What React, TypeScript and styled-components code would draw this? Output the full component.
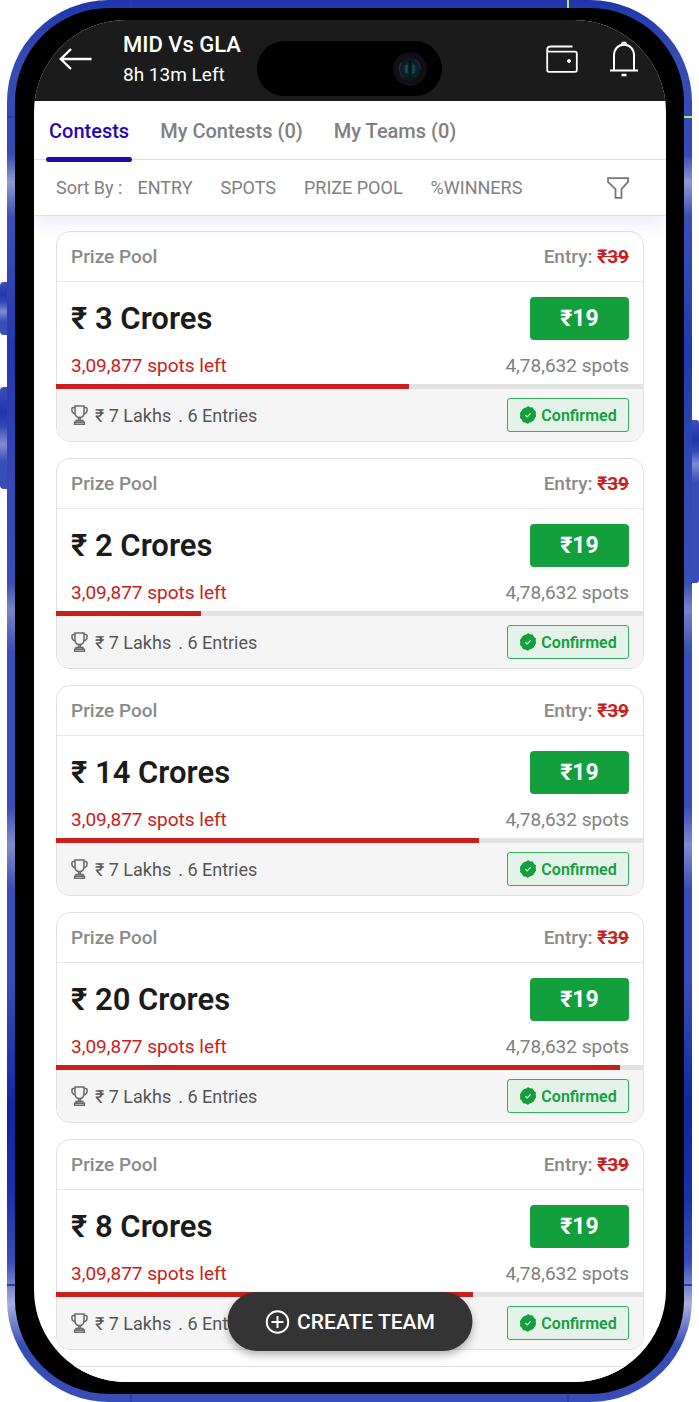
import React from "react";
import styled, { createGlobalStyle } from "styled-components";

const GlobalStyle = createGlobalStyle`
  *, *::before, *::after { box-sizing: border-box; }
  body { margin: 0; background: #fff; font-family: Roboto, "Liberation Sans", sans-serif; }
  button, h1, h2, p, ul { margin: 0; padding: 0; font: inherit; }
  button { border: 0; background: none; color: inherit; cursor: pointer; }
  svg { display: block; flex: none; }
`;

const Stage = styled.div`
  height: 100vh;
  min-height: 700px;
  padding: 0 7px;
  display: flex;
`;

const Phone = styled.div`
  position: relative;
  flex: 1;
  min-width: 0;
  display: flex;
  padding: 8px;
  border-radius: 102px;
  background: linear-gradient(
    to bottom,
    #1f36ab 0%, #364ab4 4%, #364ab4 11%, #8f99d6 13%, #3a4eb6 15.5%, #3248b4 19%,
    #2138ae 25%, #3248b4 34%, #384db5 41.5%, #7783cb 43.5%, #384db6 46.5%,
    #384db6 57.5%, #7f8bd0 60.3%, #384db6 63.5%, #384db6 70%, #1226a3 79%,
    #1a2fa9 85%, #384db6 90%, #a7aee0 93%, #364cb6 96%, #384db6 100%
  );
`;

const SideButton = styled.span<{ $side: "left" | "right"; $top: number; $height: number }>`
  position: absolute;
  ${(p) => p.$side}: -7px;
  top: ${(p) => p.$top}px;
  width: 7px;
  height: ${(p) => p.$height}px;
  border-radius: ${(p) => (p.$side === "left" ? "4px 0 0 4px" : "0 3px 3px 0")};
  background: linear-gradient(
    to bottom,
    #3a4eb6 0%,
    ${(p) =>
      p.$side === "left"
        ? "#2036ac 25%, #3549b4 38%, #7f8bd0 56%, #384db6 74%"
        : "#2036ac 12%, #3549b4 19%, #7f8bd0 27%, #384db6 38%"},
    #384db6 100%
  );
`;

const AntennaLine = styled.span<{ $edge: "top" | "bottom" | "left" | "right"; $at: string; $lime?: boolean }>`
  position: absolute;
  ${(p) => p.$edge}: 0;
  ${(p) => (p.$edge === "top" || p.$edge === "bottom" ? "left" : "top")}: ${(p) => p.$at};
  width: ${(p) => (p.$edge === "top" || p.$edge === "bottom" ? "2px" : "8px")};
  height: ${(p) => (p.$edge === "top" || p.$edge === "bottom" ? "8px" : "2px")};
  background: ${(p) => (p.$lime ? "#b9e26a" : "#2a3fa6")};
`;

const Bezel = styled.div`
  flex: 1;
  min-width: 0;
  display: flex;
  padding: 12px 18px 12px 19px;
  border-radius: 94px;
  background: #000;
`;

const Screen = styled.main`
  position: relative;
  flex: 1;
  min-width: 0;
  display: flex;
  flex-direction: column;
  overflow: hidden;
  border-radius: 92px;
  background: #fff;
`;

const Island = styled.div`
  position: absolute;
  top: 21px;
  left: 50%;
  width: 185px;
  height: 55px;
  margin-left: -93px;
  padding: 0 15px;
  display: flex;
  align-items: center;
  justify-content: flex-end;
  border-radius: 28px;
  background: #000;
`;

const Header = styled.header`
  flex: none;
  display: flex;
  align-items: center;
  justify-content: space-between;
  height: 81px;
  padding: 0 28px 4px 25px;
  background: #1b1b1b;
  color: #fff;
`;

const HeaderStart = styled.div`
  display: flex;
  align-items: center;
  gap: 31px;
`;

const HeaderActions = styled.div`
  display: flex;
  align-items: center;
  gap: 32px;
`;

const MatchInfo = styled.div`
  padding-top: 2px;
`;

const MatchTitle = styled.h1`
  font-size: 22px;
  font-weight: 500;
  line-height: 30px;
`;

const TimeLeft = styled.p`
  font-size: 19px;
  line-height: 30px;
`;

const Tabs = styled.nav`
  flex: none;
  display: flex;
  gap: 25px;
  height: 59px;
  padding: 0 12px;
  border-bottom: 1px solid #e2e2e2;
`;

const Tab = styled.button<{ $active?: boolean }>`
  position: relative;
  padding: 2px 3px 0;
  font-size: 20px;
  font-weight: 500;
  color: ${(p) => (p.$active ? "#2309ae" : "#808080")};

  &::after {
    content: "";
    display: ${(p) => (p.$active ? "block" : "none")};
    position: absolute;
    left: 0;
    right: 0;
    bottom: -3px;
    height: 5px;
    border-radius: 3px;
    background: #2309ae;
  }
`;

const SortBar = styled.div`
  position: relative;
  z-index: 1;
  flex: none;
  display: flex;
  align-items: center;
  gap: 28px;
  height: 56px;
  padding: 0 37px 0 22px;
  border-bottom: 1px solid #e0e0e4;
  box-shadow: 0 8px 16px rgba(70, 50, 190, 0.09);
  font-size: 18px;
  color: #808080;
`;

const SortLabel = styled.span`
  margin-right: -13px;
`;

const FilterButton = styled.button`
  margin-left: auto;
`;

const ContestList = styled.ul`
  flex: 1;
  min-height: 0;
  display: flex;
  flex-direction: column;
  gap: 16px;
  padding: 15px 22px 0;
  overflow: hidden;
  list-style: none;
`;

const Card = styled.li`
  flex: none;
  border: 1px solid #e0e0e0;
  border-radius: 14px;
  background: #fff;
`;

const NextCard = styled(Card)`
  flex: 1 0 28px;
  border-bottom: 0;
  border-radius: 14px 14px 0 0;
`;

const CardHead = styled.div`
  display: flex;
  align-items: center;
  justify-content: space-between;
  height: 50px;
  padding: 0 14px;
  border-bottom: 1px solid #e8e8e8;
  font-size: 19px;
  font-weight: 500;
  color: #8a8a8a;
`;

const OldPrice = styled.s`
  font-weight: 700;
  color: #c9201d;
`;

const PrizeRow = styled.div`
  display: flex;
  align-items: center;
  justify-content: space-between;
  padding: 15px 14px 12px;
`;

const Prize = styled.h2`
  font-size: 31px;
  font-weight: 600;
  line-height: 43px;
  color: #1b1b1b;
`;

const JoinButton = styled.button`
  width: 99px;
  height: 43px;
  border-radius: 4px;
  background: #139f3c;
  color: #fff;
  font-size: 23px;
  font-weight: 700;
`;

const SpotsRow = styled.div`
  display: flex;
  justify-content: space-between;
  padding: 0 14px 4px;
  font-size: 19px;
  line-height: 28px;
  color: #808080;
`;

const SpotsLeft = styled.span`
  color: #c9201d;
`;

const Track = styled.div`
  height: 5px;
  margin: 0 -1px;
  background: #e2e2e2;
`;

const Fill = styled.div`
  height: 5px;
  background: #c9201d;
`;

const CardFoot = styled.div`
  display: flex;
  align-items: center;
  gap: 7px;
  height: 52px;
  padding: 0 14px;
  border-radius: 0 0 13px 13px;
  background: #f5f5f5;
  font-size: 18px;
  color: #555;
`;

const Confirmed = styled.span`
  display: flex;
  align-items: center;
  justify-content: center;
  gap: 4px;
  width: 122px;
  height: 34px;
  margin-left: auto;
  border: 1px solid #35b05a;
  border-radius: 3px;
  background: #e4f2e9;
  color: #139f3c;
  font-size: 16px;
  font-weight: 600;
`;

const CreateTeam = styled.button`
  position: absolute;
  z-index: 2;
  bottom: 31px;
  left: 50%;
  transform: translateX(-50%);
  display: flex;
  align-items: center;
  justify-content: center;
  gap: 8px;
  width: 245px;
  height: 59px;
  border-radius: 30px;
  background: #343434;
  box-shadow: 0 4px 8px rgba(0, 0, 0, 0.3);
  color: #fff;
  font-size: 21px;
  font-weight: 500;
  white-space: nowrap;
`;

const BackIcon = () => (
  <svg width="33" height="22" viewBox="0 0 33 22" fill="none" stroke="#fff" strokeWidth="2.4">
    <path d="M32.5 11H2M12 1 1.8 11 12 21" />
  </svg>
);

const WalletIcon = () => (
  <svg width="32" height="28" viewBox="0 0 32 28" fill="none" stroke="#fff" strokeWidth="1.8">
    <path d="M26.5 1.5H5C2.5 1.5 1.2 2.6 1.2 4.8V25a1.8 1.8 0 0 0 1.8 1.8h26a1.8 1.8 0 0 0 1.8-1.8V8.5a1.8 1.8 0 0 0-1.8-1.8H3.5C2 6.7 1.200 6 1.200 4.800" />
    <circle cx="23" cy="16" r="1.500" fill="#fff" strokeWidth="1" />
  </svg>
);

const BellIcon = () => (
  <svg width="28" height="36" viewBox="0 0 28 36" fill="none" stroke="#fff" strokeWidth="2">
    <path d="M0 29.500h28M4 29.500V14.500C4 8 8 3.800 14 3.800S24 8 24 14.500v15" />
    <path d="M12 3.500a2 2 0 0 1 4 0" />
    <path d="M11.500 34h5" strokeWidth="2.400" />
  </svg>
);

const FilterIcon = () => (
  <svg width="22" height="22" viewBox="0 0 22 22" fill="none" stroke="#777" strokeWidth="1.800">
    <path d="M1 1.200h20v3.600l-6.500 7.400v8.600h-6v-8.600L1 4.800z" />
  </svg>
);

const TrophyIcon = () => (
  <svg width="17" height="20" viewBox="0 0 17 20" fill="none" stroke="#6a6a6a" strokeWidth="1.500">
    <path d="M4 1h9v6.500c0 3-1.800 5-4.500 5S4 10.500 4 7.500z" />
    <path d="M4 2.600H2.200C1.200 2.600.9 3.200.9 4.600c0 2.400 1 4 3.400 4.300M13 2.600h1.800c1 0 1.300.6 1.300 2 0 2.400-1 4-3.400 4.300" />
    <path d="M7.600 12.500V15M9.400 12.500V15M5 15.500h7v1.700H5zM3.600 17.200h9.800v2H3.600z" />
  </svg>
);

const VerifiedIcon = () => (
  <svg width="18" height="18" viewBox="0 0 18 18">
    <path
      fill="#139f3c"
      d="M9 0l2.200 1.500 2.700-.1.900 2.500 2.300 1.500-.8 2.600.8 2.600-2.200 1.700-.8 2.500-2.700.1L9 18l-2.300-1.600-2.700-.1-.9-2.500L.9 12.100l.8-2.600L.9 6.900l2.200-1.600.9-2.600 2.700-.1z"
    />
    <circle cx="9" cy="9" r="7.800" fill="#139f3c" />
    <path d="M6.400 9.200l1.800 1.700 3.400-3.600" fill="none" stroke="#e4f2e9" strokeWidth="1.200" />
  </svg>
);

const PlusIcon = () => (
  <svg width="24" height="24" viewBox="0 0 24 24" fill="none" stroke="#fff" strokeWidth="2">
    <circle cx="12" cy="12" r="10.800" />
    <path d="M12 6v12M6 12h12" />
  </svg>
);

const CameraLens = () => (
  <svg width="34" height="34" viewBox="0 0 34 34" fill="none">
    <circle cx="17" cy="17" r="17" fill="#101014" />
    <circle cx="17" cy="17" r="11.500" fill="#14141b" />
    <path d="M8 11a10.500 10.500 0 0 0 3 14M22 8a10.500 10.500 0 0 1 5 9" stroke="#35262f" strokeWidth="1.500" />
    <circle cx="17" cy="17" r="8" fill="#0d3038" stroke="#07202c" strokeWidth="3.500" />
    <path d="M17 8v18" stroke="#04121a" strokeWidth="3" />
    <path d="M13.500 13v8M20.500 13v8" stroke="#1d4a50" strokeWidth="2.400" />
  </svg>
);

interface Contest {
  prize: string;
  filled: number;
}

const contests: Contest[] = [
  { prize: "₹ 3 Crores", filled: 60 },
  { prize: "₹ 2 Crores", filled: 24.6 },
  { prize: "₹ 14 Crores", filled: 72 },
  { prize: "₹ 20 Crores", filled: 96 },
  { prize: "₹ 8 Crores", filled: 71 },
];

const ContestCard = ({ prize, filled }: Contest) => (
  <Card>
    <CardHead>
      <span>Prize Pool</span>
      <span>
        Entry: <OldPrice>₹39</OldPrice>
      </span>
    </CardHead>
    <PrizeRow>
      <Prize>{prize}</Prize>
      <JoinButton type="button">₹19</JoinButton>
    </PrizeRow>
    <SpotsRow>
      <SpotsLeft>3,09,877 spots left</SpotsLeft>
      <span>4,78,632 spots</span>
    </SpotsRow>
    <Track>
      <Fill style={{ width: `${filled}%` }} />
    </Track>
    <CardFoot>
      <TrophyIcon />
      <span>₹ 7 Lakhs</span>
      <span>. 6 Entries</span>
      <Confirmed>
        <VerifiedIcon />
        Confirmed
      </Confirmed>
    </CardFoot>
  </Card>
);

export default function App() {
  return (
    <>
      <GlobalStyle />
      <Stage>
        <Phone>
          <SideButton $side="left" $top={282} $height={53} />
          <SideButton $side="left" $top={387} $height={102} />
          <SideButton $side="right" $top={420} $height={163} />
          <AntennaLine $edge="top" $at="123px" />
          <AntennaLine $edge="top" $at="calc(100% - 125px)" $lime />
          <AntennaLine $edge="left" $at="116px" />
          <AntennaLine $edge="right" $at="116px" $lime />
          <AntennaLine $edge="left" $at="calc(100% - 118px)" />
          <AntennaLine $edge="right" $at="calc(100% - 118px)" />
          <AntennaLine $edge="bottom" $at="123px" />
          <AntennaLine $edge="bottom" $at="calc(100% - 125px)" />
          <Bezel>
            <Screen>
              <Header>
                <HeaderStart>
                  <button type="button" aria-label="Back">
                    <BackIcon />
                  </button>
                  <MatchInfo>
                    <MatchTitle>MID Vs GLA</MatchTitle>
                    <TimeLeft>8h 13m Left</TimeLeft>
                  </MatchInfo>
                </HeaderStart>
                <HeaderActions>
                  <button type="button" aria-label="Wallet">
                    <WalletIcon />
                  </button>
                  <button type="button" aria-label="Notifications">
                    <BellIcon />
                  </button>
                </HeaderActions>
              </Header>
              <Island>
                <CameraLens />
              </Island>
              <Tabs>
                <Tab type="button" $active>Contests</Tab>
                <Tab type="button">My Contests (0)</Tab>
                <Tab type="button">My Teams (0)</Tab>
              </Tabs>
              <SortBar>
                <SortLabel>Sort By :</SortLabel>
                <button type="button">ENTRY</button>
                <button type="button">SPOTS</button>
                <button type="button">PRIZE POOL</button>
                <button type="button">%WINNERS</button>
                <FilterButton type="button" aria-label="Filter">
                  <FilterIcon />
                </FilterButton>
              </SortBar>
              <ContestList>
                {contests.map((c) => (
                  <ContestCard key={c.prize} {...c} />
                ))}
                <NextCard aria-hidden="true" />
              </ContestList>
              <CreateTeam type="button">
                <PlusIcon />
                CREATE TEAM
              </CreateTeam>
            </Screen>
          </Bezel>
        </Phone>
      </Stage>
    </>
  );
}
